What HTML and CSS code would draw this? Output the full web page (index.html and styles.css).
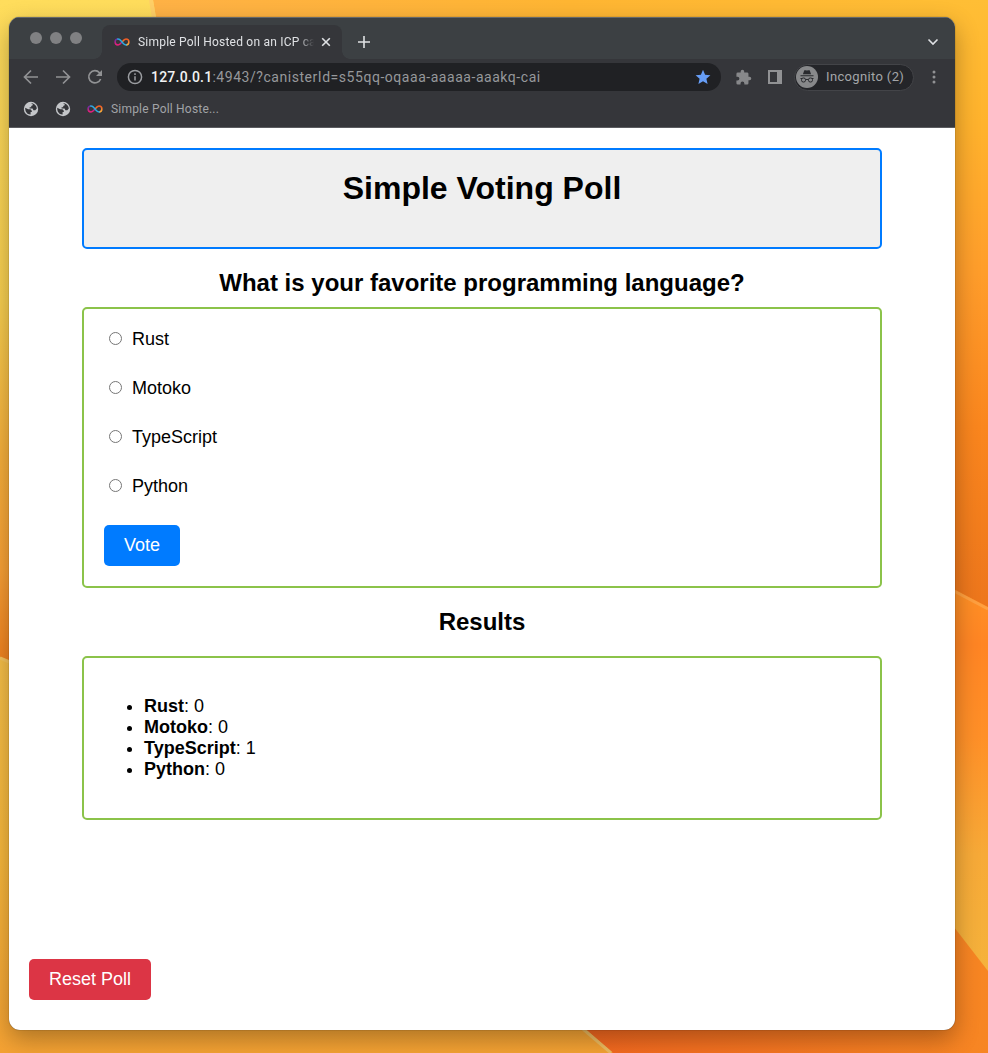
FILE: index.html
```
<!DOCTYPE html>
<html lang="en">
<head>
<meta charset="utf-8">
<title>Simple Poll Hosted on an ICP canister</title>
<link rel="stylesheet" href="styles.css">
</head>
<body>
<svg class="wallpaper" viewBox="0 0 988 1053" preserveAspectRatio="none" aria-hidden="true">
  <defs>
    <linearGradient id="left" x1="0" y1="0" x2="0" y2="1"><stop offset="0" stop-color="#ffdd5c"/><stop offset=".45" stop-color="#f8cf50"/><stop offset=".68" stop-color="#f7b03b"/><stop offset=".85" stop-color="#f9a135"/><stop offset="1" stop-color="#f07f1d"/></linearGradient>
    <linearGradient id="top" x1="0" y1="0" x2="1" y2="0"><stop offset="0" stop-color="#ffb246"/><stop offset=".5" stop-color="#ffb633"/><stop offset="1" stop-color="#ffbe35"/></linearGradient>
    <linearGradient id="right" x1="0" y1="0" x2="0" y2="1"><stop offset="0" stop-color="#ffbe35"/><stop offset=".2" stop-color="#ffb32d"/><stop offset=".45" stop-color="#ff9d2b"/><stop offset=".7" stop-color="#fa861e"/><stop offset="1" stop-color="#ed761c"/></linearGradient>
    <linearGradient id="lower" x1="0" y1="0" x2="0" y2="1"><stop offset="0" stop-color="#ff9626"/><stop offset=".2" stop-color="#ff8524"/><stop offset=".42" stop-color="#ff9028"/><stop offset=".7" stop-color="#f7aa38"/><stop offset="1" stop-color="#f5b33c"/></linearGradient>
    <linearGradient id="gold" x1="0" y1="0" x2="0" y2="1"><stop offset="0" stop-color="#f6bf48"/><stop offset=".5" stop-color="#f8b83c"/><stop offset="1" stop-color="#f5a233"/></linearGradient>
    <linearGradient id="corner" x1="0" y1="0" x2="1" y2="0"><stop offset="0" stop-color="#f4661f"/><stop offset="1" stop-color="#f78623"/></linearGradient>
  </defs>
  <rect width="300" height="670" fill="url(#left)"/>
  <path d="M153 0H988V100H170Z" fill="url(#top)"/>
  <path d="M151 0L154 18" stroke="#ffcf67" stroke-width="4"/>
  <rect x="900" width="88" height="610" fill="url(#right)"/>
  <path d="M900 561L988 607V980H900Z" fill="url(#lower)"/>
  <path d="M950 589L988 609" stroke="#ffa040" stroke-width="3"/>
  <path d="M0 657L30 671H640V1053H0Z" fill="url(#gold)"/>
  <path d="M0 658L12 663" stroke="#f7c45c" stroke-width="3"/>
  <path d="M560 1007V980L930 896L988 971V1053H613Z" fill="url(#corner)"/>
  <path d="M583 1029L611 1053" stroke="#eebc61" stroke-width="3"/>
</svg>

<svg width="0" height="0" class="defs" aria-hidden="true">
  <defs>
    <linearGradient id="loopL" x1="0" y1="0" x2="0" y2="1"><stop offset="0" stop-color="#6531a5"/><stop offset="1" stop-color="#ed1e79"/></linearGradient>
    <linearGradient id="loopR" x1="0" y1="0" x2="0" y2="1"><stop offset="0" stop-color="#f15a24"/><stop offset="1" stop-color="#fbb03b"/></linearGradient>
    <symbol id="icp" viewBox="0 0 16 8">
      <path d="M8 4C6.4 5.9 5.4 6.9 4 6.9A2.9 2.9 0 0 1 4 1.1" fill="none" stroke="url(#loopL)" stroke-width="1.5"/>
      <path d="M8 4C9.6 2.1 10.6 1.1 12 1.1A2.9 2.9 0 0 1 12 6.9" fill="none" stroke="url(#loopR)" stroke-width="1.5"/>
      <path d="M3.3 1.2C5.600 .5 6.700 2.500 8 4S10.400 7.500 12.700 6.800" fill="none" stroke="#29abe2" stroke-width="1.5"/>
    </symbol>
    <symbol id="globe" viewBox="0 0 16 16">
      <circle cx="8" cy="8" r="7.200" fill="#c4c6c9"/>
      <path d="M2.200 6.800L5.200 8.300H7.400L8.800 9.700V11H7.600V13.400C4.600 13.700 2 11.200 2.200 6.800ZM8 2.200C11.500 2.200 13.700 4.800 13.800 7.500L12.300 9.300H10.400L9.600 7.600H6.600V6.300H8.200V5L9.700 4.300V3.200Z" fill="#35363a"/>
    </symbol>
  </defs>
</svg>

<div class="window">
  <div class="tabstrip">
    <div class="lights"><i></i><i></i><i></i></div>
    <div class="tab">
      <svg class="icp"><use href="#icp"/></svg>
      <span class="tab-title">Simple Poll Hosted on an ICP canister</span>
      <svg class="close" viewBox="0 0 10 10"><path d="M1.200 1.200L8.800 8.800M8.800 1.200L1.200 8.800"/></svg>
    </div>
    <svg class="plus" viewBox="0 0 12 12"><path d="M6 0V12M0 6H12"/></svg>
    <svg class="chevron" viewBox="0 0 12 8"><path d="M1.500 1.500L6 6L10.500 1.500"/></svg>
  </div>

  <div class="toolbar">
    <svg class="nav" viewBox="0 0 16 16"><path d="M15 8H2M8 1.500L1.500 8L8 14.500"/></svg>
    <svg class="nav" viewBox="0 0 16 16"><path d="M1 8H14M8 1.500L14.500 8L8 14.500"/></svg>
    <svg class="nav" viewBox="0 0 16 16"><path d="M13.600 10A6.100 6.100 0 1 1 12.500 3.800L14 5.500"/><path class="solid" d="M15 1V7H9Z"/></svg>
    <div class="omnibox">
      <svg class="info" viewBox="0 0 16 16"><circle cx="8" cy="8" r="6.600"/><path d="M8 7.200V11.500M8 4.300V5.900"/></svg>
      <span class="url"><b>127.0.0.1</b><span class="path">:4943/?canisterId=s55qq-oqaaa-aaaaa-aaakq-cai</span></span>
      <svg class="star" viewBox="0 0 16 16"><path d="M8 .8L10.100 5.700L15.400 6.200L11.400 9.700L12.600 15L8 12.200L3.400 15L4.600 9.700L.6 6.200L5.900 5.700Z"/></svg>
    </div>
    <svg class="puzzle" viewBox="0 0 24 24"><path d="M20.500 11H19V7c0-1.100-.9-2-2-2h-4V3.500a2.500 2.500 0 0 0-5 0V5H4a2 2 0 0 0-2 2v3.800h1.500a2.700 2.700 0 0 1 0 5.400H2V20a2 2 0 0 0 2 2h3.800v-1.500a2.700 2.700 0 0 1 5.400 0V22H17a2 2 0 0 0 2-2v-4h1.500a2.500 2.500 0 0 0 0-5z"/></svg>
    <svg class="panel" viewBox="0 0 14 14"><path fill-rule="evenodd" d="M0 0H14V14H0ZM2 2V12H9V2Z"/></svg>
    <div class="incognito">
      <svg viewBox="0 0 22 22"><circle cx="11" cy="11" r="11" fill="#87888a"/><path d="M6.900 8.200L8.300 4.200H9.600L11 4.600L12.400 4.200H13.700L15.100 8.200ZM4.500 9.200H17.500V10.200H4.500Z" fill="#292a2e"/><g fill="none" stroke="#292a2e"><rect x="5.500" y="12" width="4" height="4" rx="1.700"/><rect x="12.500" y="12" width="4" height="4" rx="1.700"/><path d="M9.500 13.800Q11 12.800 12.500 13.800M4.500 12.500H6M16 12.500H17.500"/></g></svg>
      <span>Incognito (2)</span>
    </div>
    <svg class="dots" viewBox="0 0 4 14"><circle cx="2" cy="2" r="1.500"/><circle cx="2" cy="7" r="1.500"/><circle cx="2" cy="12" r="1.500"/></svg>
  </div>

  <div class="bookmarks">
    <svg class="globe"><use href="#globe"/></svg>
    <svg class="globe"><use href="#globe"/></svg>
    <svg class="icp"><use href="#icp"/></svg>
    <span>Simple Poll Hoste...</span>
  </div>

  <main class="page">
    <div class="container">
      <header class="title-box"><h1>Simple Voting Poll</h1></header>
      <h2 class="question">What is your favorite programming language?</h2>
      <form class="box poll">
        <label><input type="radio" name="option"><span>Rust</span></label>
        <label><input type="radio" name="option"><span>Motoko</span></label>
        <label><input type="radio" name="option"><span>TypeScript</span></label>
        <label><input type="radio" name="option"><span>Python</span></label>
        <button class="btn vote" type="button">Vote</button>
      </form>
      <h2 class="results-title">Results</h2>
      <div class="box results">
        <ul>
          <li><b>Rust</b>: 0</li>
          <li><b>Motoko</b>: 0</li>
          <li><b>TypeScript</b>: 1</li>
          <li><b>Python</b>: 0</li>
        </ul>
      </div>
    </div>
    <button class="btn reset" type="button">Reset Poll</button>
  </main>
</div>
</body>
</html>
```

FILE: styles.css
```
* { box-sizing: border-box; }

body {
  margin: 0;
  height: 1053px;
  padding: 17px 33px 23px 9px;
  overflow: hidden;
  font-family: "Liberation Sans", Arial, sans-serif;
}

svg { display: block; flex: none; }
.wallpaper { position: absolute; top: 0; left: 0; width: 988px; height: 1053px; }
.defs { position: absolute; }

.window {
  position: relative;
  display: flex;
  flex-direction: column;
  height: 1013px;
  border-radius: 11px;
  overflow: hidden;
  background: #fff;
  box-shadow: 0 0 1px rgba(0, 0, 0, .75), 0 9px 24px rgba(0, 0, 0, .3);
}

/* Browser chrome */
.tabstrip {
  display: flex;
  height: 42px;
  padding: 8px 16px 0 21px;
  background: #3c4043;
  box-shadow: inset 0 1px #65686a;
}
.lights { display: flex; gap: 8px; padding-top: 7px; width: 72px; }
.lights i { width: 12px; height: 12px; border-radius: 50%; background: #808183; }
.tab {
  position: relative;
  display: flex;
  align-items: center;
  width: 240px;
  height: 34px;
  padding: 0 11px 0 12px;
  border-radius: 8px 8px 0 0;
  background: #35363a;
}
.tab::before, .tab::after {
  content: "";
  position: absolute;
  bottom: 0;
  width: 8px;
  height: 8px;
}
.tab::before { left: -8px; background: radial-gradient(circle at 0 0, transparent 7.500px, #35363a 8px); }
.tab::after { right: -8px; background: radial-gradient(circle at 100% 0, transparent 7.500px, #35363a 8px); }
.icp { width: 16px; height: 8px; }
.tab-title {
  width: 176px;
  margin: 0 7px 0 8px;
  overflow: hidden;
  white-space: nowrap;
  font: 12px/18px Roboto, sans-serif;
  letter-spacing: .21px;
  color: #dfe1e4;
  -webkit-mask-image: linear-gradient(to right, #000 160px, transparent 176px);
  mask-image: linear-gradient(to right, #000 160px, transparent 176px);
}
.close { width: 10px; height: 10px; }
.close path, .plus path, .chevron path { fill: none; stroke: #dfe1e4; stroke-width: 1.600; }
.plus { width: 12px; height: 12px; margin: 11px 0 0 16px; }
.chevron { width: 12px; height: 8px; margin: 13px 0 0 auto; }

.toolbar {
  display: flex;
  align-items: center;
  height: 36px;
  padding: 0 19px 0 14px;
  background: #35363a;
}
.nav { width: 16px; height: 16px; margin-right: 16px; }
.nav path { fill: none; stroke: #919294; stroke-width: 1.700; }
.nav path.solid { fill: #919294; stroke: none; }
.omnibox {
  display: flex;
  align-items: center;
  width: 604px;
  height: 28px;
  margin-left: -2px;
  padding: 0 10px;
  border-radius: 14px;
  background: #202124;
}
.info { width: 16px; height: 16px; }
.info path, .info circle { fill: none; stroke: #9b9da1; stroke-width: 1.500; }
.url {
  margin-left: 8px;
  font: 14px/20px Roboto, sans-serif;
  letter-spacing: .22px;
  color: #96989b;
  white-space: nowrap;
}
.url b { font-weight: 500; color: #f1f2f3; }
.url .path { letter-spacing: .54px; }
.star { width: 16px; height: 16px; margin-left: auto; fill: #669df6; }
.puzzle { width: 17px; height: 17px; margin-left: 14px; fill: #87888a; }
.panel { width: 14px; height: 14px; margin-left: 16px; fill: #919294; }
.incognito {
  display: flex;
  align-items: center;
  width: 120px;
  height: 27px;
  margin-left: 12px;
  padding-left: 1px;
  border: 1px solid #434448;
  border-radius: 14px;
  background: #242529;
  font: 13px/18px Roboto, sans-serif;
  letter-spacing: .35px;
  color: #a3a5a8;
  white-space: nowrap;
}
.incognito svg { width: 22px; height: 22px; margin-right: 8px; }
.dots { width: 4px; height: 14px; margin-left: auto; fill: #919294; }

.bookmarks {
  display: flex;
  align-items: center;
  height: 33px;
  padding: 0 14px 4px;
  border-bottom: 1px solid #5b5c60;
  background: #35363a;
  font: 12px/18px Roboto, sans-serif;
  letter-spacing: .2px;
  color: #a1a3a6;
}
.globe { width: 16px; height: 16px; margin-right: 16px; }
.bookmarks .icp { margin: 0 8px 0 0; }

/* Poll page */
.page {
  display: flex;
  flex: 1;
  flex-direction: column;
  justify-content: space-between;
  padding: 20px 20px 30px;
  font-size: 18px;
  line-height: 21px;
}
.container { width: 800px; margin: 0 auto; }
.title-box {
  height: 101px;
  padding: 20px;
  border: 2px solid #007bff;
  border-radius: 5px;
  background: #efefef;
  text-align: center;
}
h1 { margin: 0; font-size: 32px; line-height: 36px; }
h2 { margin: 0; font-size: 24px; line-height: 28px; text-align: center; }
.question { padding: 20px 0 10px; }
.results-title { padding: 20px 0; }
.box { padding: 20px; border: 2px solid #8bc34a; border-radius: 5px; }
.poll { height: 281px; }
.poll label { display: flex; align-items: center; height: 21px; margin-bottom: 28px; }
.poll input { width: 13px; height: 13px; margin: 0 10px 2px 5px; }
.results { height: 164px; }
ul { margin: 18px 0; padding-left: 40px; }
.btn {
  display: block;
  height: 41px;
  padding: 10px 0;
  border: 0;
  border-radius: 5px;
  color: #fff;
  font: 18px/21px "Liberation Sans", Arial, sans-serif;
  white-space: nowrap;
}
.vote { width: 76px; background: #007bff; }
.reset { width: 122px; background: #dc3545; }
```
